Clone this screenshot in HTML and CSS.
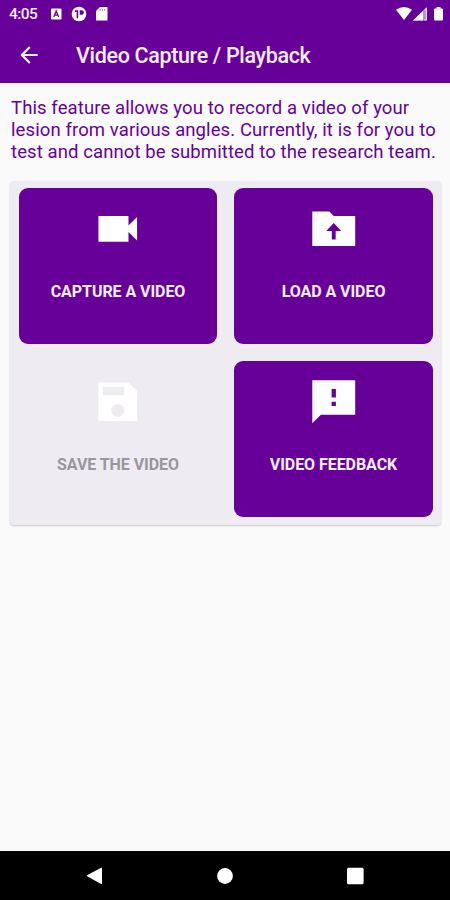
FILE: index.html
```html
<!DOCTYPE html>
<html lang="en">
<head>
<meta charset="utf-8">
<title>Video Capture / Playback</title>
<link rel="stylesheet" href="styles.css">
</head>
<body>
<header class="top">
  <div class="status">
    <span class="clock">4:05</span>
    <svg class="notices" width="60" height="16" viewBox="0 0 60 16" fill="#fff">
      <rect x="1" y="2.500" width="10.500" height="11" rx="1"/>
      <path d="M3.800 11 6.200 5l2.400 6M4.700 9.200h3" fill="none" stroke="#609" stroke-width="1.300"/>
      <circle cx="29" cy="8" r="7.300"/>
      <path d="M25 4.300h3.200v7.900H26.600V6H25zM29.700 4.300h2a2.200 2.200 0 0 1 0 4.400h-2z" fill="#609"/>
      <path d="M50 1h7.500v13.500H46V5z"/>
      <path d="M50.200 3v2M52.400 3v2M54.600 3v2" stroke="#b58acb" stroke-width="1"/>
    </svg>
    <svg class="signals" width="50" height="16" viewBox="0 0 50 16" fill="#fff">
      <path d="M0 3.800Q8 -2 16 3.800L8 14Z"/>
      <path d="M31 1v13.500H17z" fill="#b893d0"/>
      <path d="M27 5v9.500H17z"/>
      <path d="M28 4.500 30.500 2v12H28" fill="none" stroke="#eee" stroke-width=".8"/>
      <path d="M40.500 1h4v1.500H46a1 1 0 0 1 1 1v10a1 1 0 0 1-1 1h-7a1 1 0 0 1-1-1v-10a1 1 0 0 1 1-1h1.500z"/>
    </svg>
  </div>
  <div class="appbar">
    <svg class="back" width="26" height="26" viewBox="0 0 24 24" fill="#f6eefa"><path d="M20 11H7.830l5.590-5.590L12 4l-8 8 8 8 1.410-1.410L7.830 13H20z"/></svg>
    <h1>Video Capture / Playback</h1>
  </div>
</header>
<main>
  <p class="intro">This feature allows you to record a video of your<br>lesion from various angles. Currently, it is for you to<br>test and cannot be submitted to the research team.</p>
  <section class="panel">
    <button class="tile">
      <svg viewBox="0 0 24 24"><path d="M17 10.500V6H3v12h14v-4.500l4 4v-11z"/></svg>
      <span>CAPTURE A VIDEO</span>
    </button>
    <button class="tile">
      <svg viewBox="0 0 24 24"><path fill-rule="evenodd" d="M22 6H12l-2-2H2v16h20zM12.900 13v4h-1.800v-4H8.500L12 9.300 15.500 13z"/></svg>
      <span>LOAD A VIDEO</span>
    </button>
    <button class="tile disabled" disabled>
      <svg viewBox="0 0 24 24"><path d="M17 3H3v18h18V7zm-5 16a3 3 0 1 1 0-6 3 3 0 0 1 0 6zm3-10H5V5h10z"/></svg>
      <span>SAVE THE VIDEO</span>
    </button>
    <button class="tile">
      <svg viewBox="0 0 24 24"><path d="M22 2H2v20l4-4h16zm-9 12h-2v-2h2zm0-4h-2V6h2z"/></svg>
      <span>VIDEO FEEDBACK</span>
    </button>
  </section>
</main>
<nav>
  <svg width="20" height="20" viewBox="0 0 20 20"><path d="M2.500 9 16.200 1.700Q17 1.300 17 2.200V17.500Q17 18.400 16.200 18L2.500 10.500Q1.400 9.700 2.500 9z"/></svg>
  <svg width="20" height="20" viewBox="0 0 20 20"><circle cx="10" cy="10" r="7.900"/></svg>
  <svg width="20" height="20" viewBox="0 0 20 20"><rect x="2" y="1.700" width="16.600" height="16.600" rx="1.500"/></svg>
</nav>
</body>
</html>
```
FILE: styles.css
```css
* { box-sizing: border-box; }
body {
  margin: 0;
  height: 900px;
  display: flex;
  flex-direction: column;
  background: #fafafa;
  font-family: Roboto, sans-serif;
  overflow: hidden;
}
.top { height: 83px; background: #609; color: #f6eefa; }
.status { height: 27px; display: flex; align-items: center; padding: 0 4px 0 9px; }
.clock { width: 41px; font-size: 15.5px; font-weight: 500; line-height: 26px; letter-spacing: -.6px; }
.signals { margin-left: auto; }
.appbar { height: 56px; display: flex; align-items: center; padding-left: 16px; }
h1 { margin: 2px 0 0 34px; font-size: 21.5px; font-weight: 500; line-height: 28px; letter-spacing: -.34px; white-space: nowrap; }
main { flex: 1; padding: 14px 9px 0 10px; }
.intro { margin: 0; padding-left: 1px; color: #609; font-size: 18.500px; line-height: 22.200px; letter-spacing: .1px; white-space: nowrap; height: 84px; }
.panel {
  height: 344px;
  padding: 7px 8px 8px 9px;
  margin-top: -.5px;
  display: grid;
  grid-template-columns: 198px 199px;
  grid-template-rows: 156px 156px;
  gap: 17px;
  background: #eeecf1;
  border-radius: 4px;
  box-shadow: 0 1px 2px rgba(0, 0, 0, .2);
}
.tile {
  margin: 0;
  padding: 15px 0 0;
  border: 0;
  border-radius: 9px;
  display: flex;
  flex-direction: column;
  align-items: center;
  background: #609;
  color: #f8f0fc;
  font: 700 16px/20px Roboto, sans-serif;
  letter-spacing: -.06px;
  white-space: nowrap;
}
.tile svg { width: 51.500px; height: 51.500px; fill: #fff; margin-bottom: 27.500px; }
.disabled { background: transparent; color: #99979c; }
nav { height: 49px; background: #000; display: flex; justify-content: space-between; padding: 14.500px 85px 0; }
nav svg { fill: #fff; }
```
